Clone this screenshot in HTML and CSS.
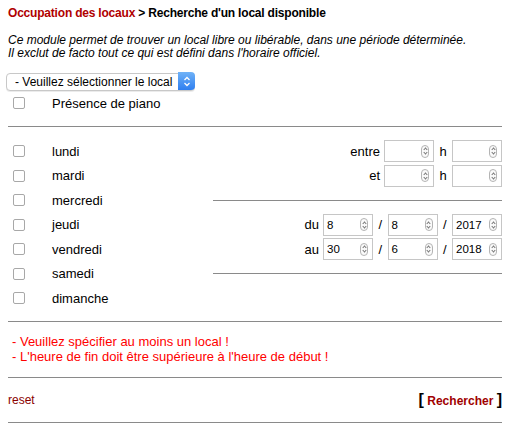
FILE: index.html
```html
<!DOCTYPE html>
<html lang="fr">
<head>
<meta charset="utf-8">
<title>Recherche d'un local disponible</title>
<link rel="stylesheet" href="styles.css">
</head>
<body>
<div class="page">
  <h1 class="title"><a class="crumb" href="#">Occupation des locaux</a> &gt; Recherche d'un local disponible</h1>
  <p class="intro">Ce module permet de trouver un local libre ou libérable, dans une période déterminée.<br>Il exclut de facto tout ce qui est défini dans l'horaire officiel.</p>

  <div class="select-wrap">
    <select class="local">
      <option>- Veuillez sélectionner le local</option>
    </select>
    <span class="select-arrow"><svg width="8" height="11" viewBox="0 0 8 11"><path d="M1.5 4 L4 1.5 L6.5 4 M1.5 7 L4 9.5 L6.5 7" fill="none" stroke="#fff" stroke-width="1.3"/></svg></span>
  </div>

  <div class="row piano">
    <span class="cb"></span>
    <span class="label">Présence de piano</span>
  </div>

  <hr class="rule">

  <div class="days">
    <div class="day"><span class="cb"></span><span class="label">lundi</span></div>
    <div class="day"><span class="cb"></span><span class="label">mardi</span></div>
    <div class="day"><span class="cb"></span><span class="label">mercredi</span></div>
    <div class="day"><span class="cb"></span><span class="label">jeudi</span></div>
    <div class="day"><span class="cb"></span><span class="label">vendredi</span></div>
    <div class="day"><span class="cb"></span><span class="label">samedi</span></div>
    <div class="day"><span class="cb"></span><span class="label">dimanche</span></div>

    <div class="side">
      <div class="srow"><span class="lbl">entre</span><span class="num"><span class="val"></span><span class="spin"></span></span><span class="sep">h</span><span class="num"><span class="val"></span><span class="spin"></span></span></div>
      <div class="srow"><span class="lbl">et</span><span class="num"><span class="val"></span><span class="spin"></span></span><span class="sep">h</span><span class="num"><span class="val"></span><span class="spin"></span></span></div>
      <div class="srow"><hr class="srule"></div>
      <div class="srow"><span class="lbl">du</span><span class="num"><span class="val">8</span><span class="spin"></span></span><span class="sep slash">/</span><span class="num"><span class="val">8</span><span class="spin"></span></span><span class="sep slash">/</span><span class="num"><span class="val">2017</span><span class="spin"></span></span></div>
      <div class="srow"><span class="lbl">au</span><span class="num"><span class="val">30</span><span class="spin"></span></span><span class="sep slash">/</span><span class="num"><span class="val">6</span><span class="spin"></span></span><span class="sep slash">/</span><span class="num"><span class="val">2018</span><span class="spin"></span></span></div>
      <div class="srow"><hr class="srule"></div>
    </div>
  </div>

  <hr class="rule">

  <div class="errors">
    <div>- Veuillez spécifier au moins un local !</div>
    <div>- L'heure de fin doit être supérieure à l'heure de début !</div>
  </div>

  <hr class="rule">

  <div class="actions">
    <a class="reset" href="#">reset</a>
    <span class="submit"><span class="br">[</span> <a href="#">Rechercher</a> <span class="br">]</span></span>
  </div>

  <hr class="rule">
</div>
</body>
</html>
```

FILE: styles.css
```css
html, body {
  margin: 0;
  padding: 0;
  background: #fff;
}
body {
  font-family: "Liberation Sans", Arial, sans-serif;
  color: #000;
}
.page {
  padding: 6px 11px 0 8px;
}
.title {
  margin: 0;
  font-size: 12px;
  letter-spacing: -0.2px;
  font-weight: bold;
  line-height: 15px;
}
.crumb {
  color: #b00000;
  text-decoration: none;
}
.intro {
  margin: 13px 0 0 0;
  font-size: 12px;
  font-style: italic;
  line-height: 13px;
}
.select-wrap {
  position: relative;
  display: inline-block;
  margin: 12px 0 0 -2px;
  height: 18px;
  vertical-align: top;
}
.local {
  -webkit-appearance: none;
  appearance: none;
  width: 189px;
  height: 18px;
  margin: 0;
  padding: 0 0 0 8px;
  border: 1px solid #c8c8c8;
  border-radius: 4px;
  background: #fff;
  font-family: "Liberation Sans", Arial, sans-serif;
  font-size: 12px;
  color: #000;
  box-shadow: 0 1px 0 rgba(0,0,0,0.08);
}
.select-arrow {
  position: absolute;
  right: 0;
  top: 0;
  width: 17px;
  height: 18px;
  border-radius: 0 4px 4px 0;
  background: linear-gradient(#6fb2f7, #2f7ff0);
  display: flex;
  align-items: center;
  justify-content: center;
}
.row {
  display: flex;
  align-items: center;
}
.piano {
  height: 26px;
  margin-bottom: 10px;
}
.cb {
  display: inline-block;
  width: 10px;
  height: 10px;
  border: 1px solid #a8a8a8;
  border-radius: 2px;
  background: #fff;
  margin-left: 5px;
  flex: none;
}
.label {
  font-size: 13px;
  margin-left: 27px;
}
.rule {
  margin: 0;
  border: 0;
  border-top: 1px solid #8a8a8a;
  height: 0;
}
.days {
  display: grid;
  grid-template-columns: 205px 1fr;
  grid-template-rows: repeat(7, 24.5px);
  padding: 12px 0 10px 0;
}
.day {
  grid-column: 1;
  display: flex;
  align-items: center;
}
.side {
  grid-column: 2;
  grid-row: 1 / span 6;
  display: grid;
  grid-template-rows: repeat(6, 24.5px);
}
.srow {
  display: flex;
  align-items: center;
  justify-content: flex-end;
  font-size: 13px;
}
.srule {
  width: 100%;
  margin: 0;
  border: 0;
  border-top: 1px solid #8a8a8a;
}
.lbl {
  margin-right: 4px;
}
.sep {
  width: 18px;
  text-align: center;
}
.sep.slash {
  width: 14.5px;
}
.num {
  display: inline-flex;
  align-items: center;
  justify-content: space-between;
  box-sizing: border-box;
  width: 50px;
  height: 22px;
  border: 1px solid #c6c6c6;
  background: #fff;
  padding: 0 4px 0 3px;
  font-size: 11.5px;
}
.spin {
  width: 6px;
  height: 11px;
  border: 1px solid #b4b4b4;
  border-radius: 4px;
  position: relative;
  background: #fafafa;
}
.spin::before,
.spin::after {
  content: "";
  position: absolute;
  left: 1.5px;
  width: 2px;
  height: 2px;
  border-color: #777;
  border-style: solid;
  border-width: 1px 0 0 1px;
}
.spin::before {
  top: 2.5px;
  transform: rotate(45deg);
}
.spin::after {
  bottom: 2.5px;
  transform: rotate(225deg);
}
.errors {
  padding: 12px 0 13px 4px;
  font-size: 13px;
  line-height: 15px;
  color: #ff0000;
}
.actions {
  display: flex;
  justify-content: space-between;
  align-items: center;
  height: 44px;
}
.reset {
  color: #8b0000;
  text-decoration: none;
  font-size: 12px;
}
.submit {
  font-size: 12px;
  font-weight: bold;
}
.submit a {
  color: #a00000;
  text-decoration: none;
}
.br {
  font-size: 16px;
  color: #000;
}
```
